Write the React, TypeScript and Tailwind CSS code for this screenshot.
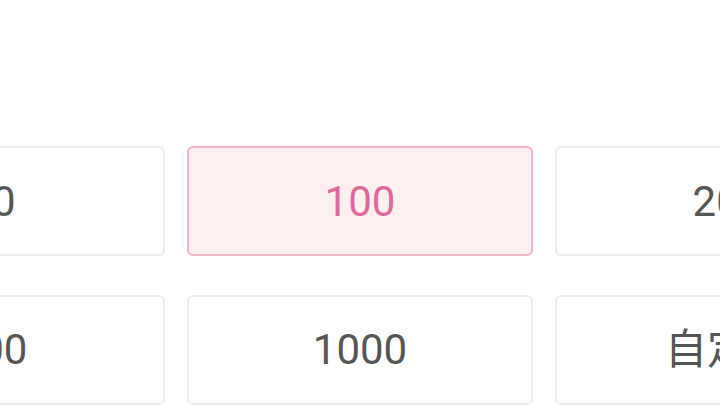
const amounts = [
  { label: "50" },
  { label: "100", active: true },
  { label: "200" },
  { label: "500" },
  { label: "1000" },
  { label: "自定义" },
];

export default function App() {
  return (
    <div className="flex h-[405px] w-full justify-center overflow-hidden bg-white pt-[146px] font-['Roboto','Noto_Sans_CJK_SC',sans-serif]">
      <div className="grid w-[1082px] shrink-0 grid-cols-3 gap-x-[22px] gap-y-[38px]">
        {amounts.map((a) => (
          <div
            key={a.label}
            className={
              a.active
                ? "flex h-[110px] items-center justify-center rounded-[6px] border-2 border-[#f3b3cb] bg-[#fdf0f1] text-[42px] text-[#e0689a]"
                : "flex h-[110px] items-center justify-center rounded-[6px] border-2 border-[#ececec] bg-white text-[42px] text-[#555555]"
            }
          >
            {a.label}
          </div>
        ))}
      </div>
    </div>
  );
}
